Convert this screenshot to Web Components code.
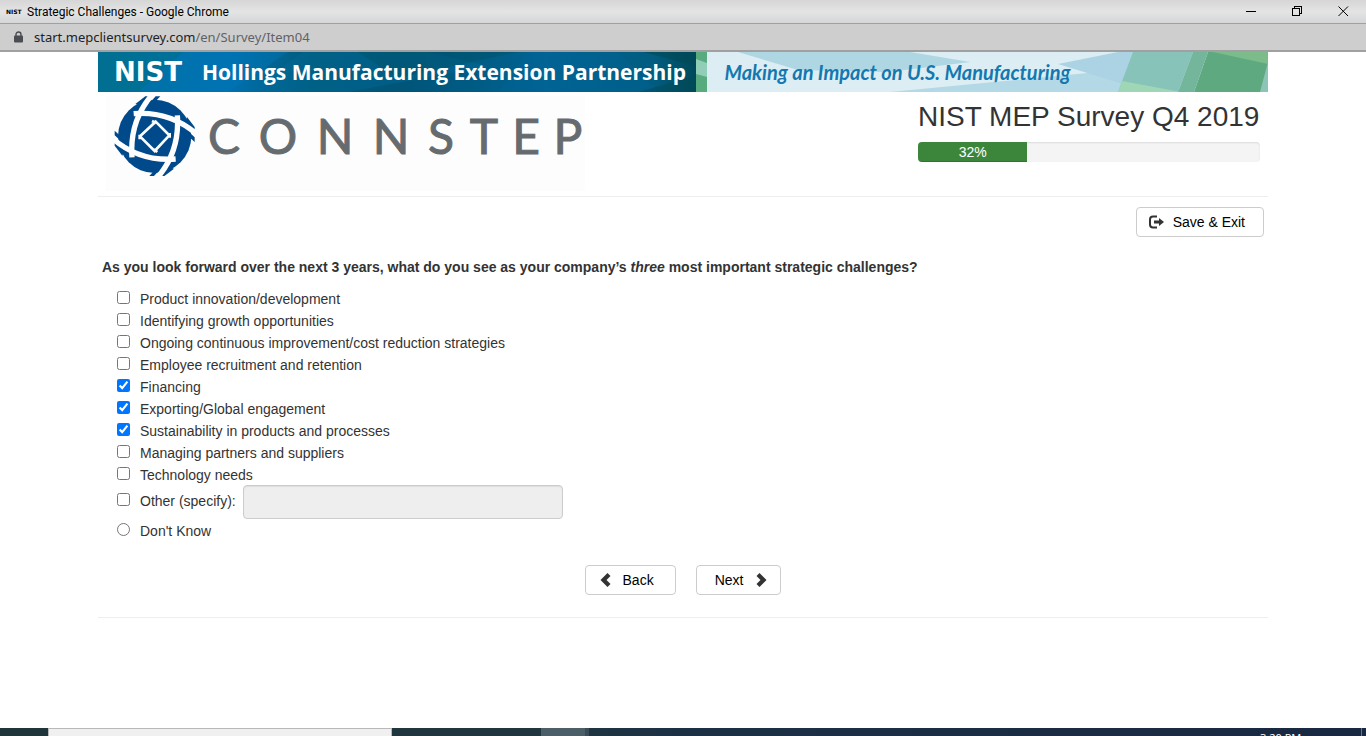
<!DOCTYPE html>
<html lang="en">
<head>
<meta charset="utf-8">
<title>Strategic Challenges</title>
<style>
  html, body { margin: 0; }
  body { font: 14px/20px "Liberation Sans", Arial, sans-serif; color: #333; background: #fff; }
</style>
</head>
<body>
<survey-window></survey-window>

<script>
const define = (name, html, setup) => {
  const template = document.createElement('template');
  template.innerHTML = html;
  customElements.define(name, class extends HTMLElement {
    constructor() {
      super();
      this.attachShadow({ mode: 'open' }).append(template.content.cloneNode(true));
    }
    connectedCallback() { if (setup) setup(this, this.shadowRoot); }
  });
};

/* Window caption with its controls */
define('window-caption', `
<style>
  :host { display: flex; align-items: center; height: 23px; padding-left: 6px; color: #000;
    background: linear-gradient(#d6d6d6, #e4e4e4 50%, #d4d6d8); border-bottom: 1px solid #a0a0a0;
    font: 12px/16px Roboto, sans-serif; }
  .mark { font: bold 6px/16px "DejaVu Sans", sans-serif; width: 21px; }
  .title { flex: 1; }
  button { width: 46px; height: 23px; padding: 0; border: 0; background: none; display: grid; place-items: center; }
  svg { display: block; }
</style>
<span class="mark">NIST</span>
<span class="title"><slot></slot></span>
<button aria-label="Minimize"><svg width="11" height="11" shape-rendering="crispEdges"><path d="M0 5.500H10" stroke="#000"/></svg></button>
<button aria-label="Restore"><svg width="11" height="11" fill="none" stroke="#000" shape-rendering="crispEdges"><path d="M.5 2.500H7.500V9.500H.5ZM2.500 2V.5H9.500V7.500H8"/></svg></button>
<button aria-label="Close"><svg width="11" height="11" fill="none" stroke="#000"><path d="M.5 .5L10 10M10 .5L.5 10"/></svg></button>
`);

define('address-bar', `
<style>
  :host { display: flex; align-items: center; gap: 11px; height: 26px; padding-left: 14px; color: #5f6368;
    background: #cecece; border-bottom: 2px solid #a0a0a0; font: 13px/20px "Noto Sans", "Open Sans", sans-serif; }
  b { font-weight: 400; color: #202124; }
</style>
<svg width="9" height="12" aria-hidden="true"><path d="M2 5V3.500a2.500 2.500 0 0 1 5 0V5" fill="none" stroke="#4a4d51" stroke-width="1.400"/><rect y="4.500" width="9" height="7" rx="1" fill="#4a4d51"/></svg>
<span><b>start.mepclientsurvey.com</b>/en/Survey/Item04</span>
`);

define('program-banner', `
<style>
  :host { display: flex; align-items: center; position: relative; height: 40px; overflow: hidden; }
  svg { position: absolute; inset: 0; width: 100%; height: 100%; }
  span { position: relative; white-space: nowrap; }
  .left { display: flex; align-items: center; gap: 20px; width: 52%; padding-left: 16px; box-sizing: border-box; color: #fff; margin-right: 18px; }
  .nist { font: bold 26px/40px "DejaVu Sans", sans-serif; }
  .name { font: 700 21px/40px "Open Sans", sans-serif; }
  .motto { color: #1478b0; font: italic bold 20px/40px Lato, sans-serif; }
</style>
<svg viewBox="0 0 1170 40" preserveAspectRatio="none" aria-hidden="true">
  <defs>
    <linearGradient id="sea"><stop offset="0" stop-color="#006d92"/><stop offset=".22" stop-color="#0070b0"/><stop offset=".36" stop-color="#005a78"/><stop offset=".52" stop-color="#00557a"/><stop offset=".75" stop-color="#006390"/><stop offset=".93" stop-color="#005c80"/><stop offset="1" stop-color="#00495a"/></linearGradient>
  </defs>
  <path d="M0 0H598V40H0Z" fill="url(#sea)"/>
  <path d="M0 0H85L40 40H0Z" fill="#00728f" opacity=".5"/>
  <path d="M85 0H190L130 40H40Z" fill="#0077b8" opacity=".4"/>
  <path d="M205 0H330L390 14L250 40H150Z" fill="#006b9c" opacity=".4"/>
  <path d="M260 0H420L300 26Z" fill="#005064" opacity=".4"/>
  <path d="M400 40L430 0H520L560 40Z" fill="#0068a0" opacity=".3"/>
  <path d="M545 0H598V14Z" fill="#004a55" opacity=".6"/>
  <path d="M540 40L598 24V40Z" fill="#004a55" opacity=".5"/>
  <path d="M598 0H609V40H598Z" fill="#58aa7f"/>
  <path d="M598 7L609 11V25L598 22Z" fill="#92cdb8"/>
  <path d="M609 0H1170V40H609Z" fill="#dcedf3"/>
  <path d="M640 0H812L872 10L790 20L700 18Z" fill="#aed6e3"/>
  <path d="M792 40L1000 20L1090 40Z" fill="#b3d8e6"/>
  <path d="M960 12L1020 0H1036L1025 32Z" fill="#abd3e4"/>
  <path d="M1035 0H1095L1080 40H1020Z" fill="#87c3b8"/>
  <path d="M1024 29L1083 40H1020Z" fill="#9fd6b6"/>
  <path d="M1110 0H1170V40H1096Z" fill="#5ea980"/>
  <path d="M1095 0H1110L1096 40H1080Z" fill="#74b69c"/>
  <path d="M1115 0H1170V12Z" fill="#7cbc8a"/>
  <path d="M1170 10V40H1162Z" fill="#8cc4b8"/>
</svg>
<span class="left"><span class="nist">NIST</span><span class="name">Hollings Manufacturing Extension Partnership</span></span>
<span class="motto">Making an Impact on U.S. Manufacturing</span>
`);

define('connstep-logo', `
<style>
  :host { display: flex; width: 479px; height: 95px; background: #fdfdfd; box-sizing: border-box; padding-left: 6px; }
  svg { width: 84px; height: 80px; flex: none; }
  .word { display: grid; grid-template-columns: 52px 56px 58px 54px 46px 40px 44px 40px; justify-items: center;
    height: 80px; padding-left: 2px; font: 48px/80px Lato, sans-serif; color: #666b6f; -webkit-text-stroke: 1px #666b6f; }
</style>
<svg viewBox="18 16 252 240" aria-hidden="true">
  <defs>
    <path id="band" d="M142 8C100 55 72 120 78 200" fill="none" stroke="#fdfdfd" stroke-width="16"/>
    <path id="tip" d="M163 17H149L126 42L138 44ZM131 17H118L88 40L108 48Z" fill="#004a8c"/>
  </defs>
  <circle cx="146" cy="137" r="110" fill="#004a8c"/>
  <g><use href="#tip"/><use href="#tip" transform="rotate(90 146 137)"/><use href="#tip" transform="rotate(180 146 137)"/><use href="#tip" transform="rotate(270 146 137)"/></g>
  <use href="#band"/><use href="#band" transform="rotate(90 146 137)"/><use href="#band" transform="rotate(180 146 137)"/><use href="#band" transform="rotate(270 146 137)"/>
  <path d="M149 93L190 134L146 181L102 137ZM138 91L150 97M191 127V141M143 176L154 184M101 132V146" fill="none" stroke="#fdfdfd" stroke-width="8"/>
</svg>
<span class="word" role="img" aria-label="CONNSTEP"><span>C</span><span>O</span><span>N</span><span>N</span><span>S</span><span>T</span><span>E</span><span>P</span></span>
`);

define('survey-progress', `
<style>
  :host { display: block; height: 20px; border-radius: 4px; overflow: hidden; background: #f4f4f4; box-shadow: inset 0 1px 2px rgba(0,0,0,.1); }
  .bar { height: 20px; background: #3c863c; box-shadow: inset 0 -1px 0 rgba(0,0,0,.15); color: #fff; text-align: center; }
</style>
<div class="bar" role="progressbar" aria-valuemin="0" aria-valuemax="100"></div>
`, (host, root) => {
  const bar = root.querySelector('.bar');
  const value = host.getAttribute('value');
  bar.style.width = value + '%';
  bar.setAttribute('aria-valuenow', value);
  bar.textContent = value + '%';
});

define('survey-button', `
<style>
  :host { display: inline-flex; }
  button { display: flex; align-items: center; gap: 9px; height: 30px; box-sizing: border-box; padding: 0 18px 0 12px;
    border: 1px solid #ccc; border-radius: 4px; background: #fff; color: #000; font: inherit; white-space: nowrap; }
  :host([kind="back"]) button { padding: 0 21px 0 14px; gap: 12px; }
  :host([kind="next"]) button { padding: 0 13px 0 18px; gap: 13px; flex-direction: row-reverse; }
  svg { display: none; fill: #333; }
  :host([kind="exit"]) .exit, :host([kind="back"]) .back, :host([kind="next"]) .next { display: block; }
</style>
<button type="button">
  <svg class="exit" width="15" height="14"><path d="M8 1.500H4Q1 1.500 1 4.500V9.500Q1 12.500 4 12.500H8" fill="none" stroke="#333" stroke-width="2"/><path d="M5 5.500H10V3L15 7L10 11V8.500H5Z"/></svg>
  <svg class="back" width="11" height="14"><path d="M7.500 0L10.500 3L6.500 7L10.500 11L7.500 14L.5 7Z"/></svg>
  <svg class="next" width="11" height="14"><path d="M3.500 0L.5 3L4.500 7L.5 11L3.500 14L10.500 7Z"/></svg>
  <span><slot></slot></span>
</button>
`);

define('survey-option', `
<style>
  :host { display: flex; align-items: center; min-height: 22px; }
  label { display: flex; align-items: center; line-height: 22px; }
  :host([specify]) label { padding-bottom: 4px; }
  input { flex: none; width: 13px; height: 13px; margin: 0 10px 1px 0; }
  .text { padding-top: 2px; line-height: 20px; }
</style>
<label><input><span class="text"><slot></slot></span></label>
<slot name="detail"></slot>
`, (host, root) => {
  const input = root.querySelector('input');
  input.type = host.getAttribute('type') || 'checkbox';
  input.checked = host.hasAttribute('checked');
});

define('specify-field', `
<style>
  :host { display: block; margin-left: 7px; }
  input { display: block; width: 320px; height: 34px; box-sizing: border-box; padding: 6px 12px; font: inherit;
    border: 1px solid #ccc; border-radius: 4px; background: #eee; box-shadow: inset 0 1px 1px rgba(0,0,0,.075); }
</style>
<input type="text" aria-label="Other (specify)" disabled>
`);

define('task-bar', `
<style>
  :host { display: flex; height: 8px; overflow: hidden; background: linear-gradient(90deg, #20343c, #20363f 40%, #1c3044 50%, #192841); }
  .search { flex: none; width: 342px; margin-left: 48px; border: 1px solid #b8b8b8; border-bottom: 0; background: #f0f0f0; }
  .app { width: 44px; margin-left: 149px; background: #4c5e67; border-right: 4px solid #394c57; }
  .clock { margin-left: auto; width: 42px; padding-top: 2px; font: 11px/16px "Noto Sans", sans-serif; color: #fff; white-space: nowrap; }
  .peek { width: 4px; margin-left: 59px; border-left: 1px solid #69758a; }
</style>
<span class="search"></span><span class="app"></span><span class="clock">3:20 PM</span><span class="peek"></span>
`);

define('survey-page', `
<style>
  :host { display: block; width: 100%; max-width: 1170px; margin: 0 auto; }
  header { display: flex; justify-content: space-between; align-items: flex-start; padding: 4px 8px 5px; border-bottom: 1px solid #eee; }
  .status { width: 342px; }
  h1 { margin: 5px 0 10px; font-size: 28px; line-height: 31px; font-weight: 400; white-space: nowrap; }
  .tools { display: flex; justify-content: flex-end; padding: 10px 4px 0; }
  fieldset { border: 0; margin: 0; padding: 20px 4px 0; min-width: 0; }
  legend { float: left; width: 100%; padding: 0; font-weight: bold; line-height: 20px; }
  .options { clear: both; padding: 10px 0 0 15px; }
  nav { display: flex; justify-content: center; gap: 20px; padding: 24px 0 22px; border-bottom: 1px solid #eee; }
</style>
<program-banner></program-banner>
<header>
  <connstep-logo></connstep-logo>
  <div class="status">
    <h1>NIST MEP Survey Q4 2019</h1>
    <survey-progress value="32"></survey-progress>
  </div>
</header>
<main>
  <div class="tools"><survey-button kind="exit">Save &amp; Exit</survey-button></div>
  <fieldset>
    <legend>As you look forward over the next 3 years, what do you see as your company’s <em>three</em> most important strategic challenges?</legend>
    <div class="options">
      <survey-option>Product innovation/development</survey-option>
      <survey-option>Identifying growth opportunities</survey-option>
      <survey-option>Ongoing continuous improvement/cost reduction strategies</survey-option>
      <survey-option>Employee recruitment and retention</survey-option>
      <survey-option checked>Financing</survey-option>
      <survey-option checked>Exporting/Global engagement</survey-option>
      <survey-option checked>Sustainability in products and processes</survey-option>
      <survey-option>Managing partners and suppliers</survey-option>
      <survey-option>Technology needs</survey-option>
      <survey-option specify>Other (specify):<specify-field slot="detail"></specify-field></survey-option>
      <survey-option type="radio">Don't Know</survey-option>
    </div>
  </fieldset>
  <nav><survey-button kind="back">Back</survey-button><survey-button kind="next">Next</survey-button></nav>
</main>
`);

define('survey-window', `
<style>
  :host { display: flex; flex-direction: column; min-height: 100vh; }
  .view { flex: 1; }
</style>
<window-caption>Strategic Challenges - Google Chrome</window-caption>
<address-bar></address-bar>
<div class="view"><survey-page></survey-page></div>
<task-bar></task-bar>
`);
</script>
</body>
</html>
